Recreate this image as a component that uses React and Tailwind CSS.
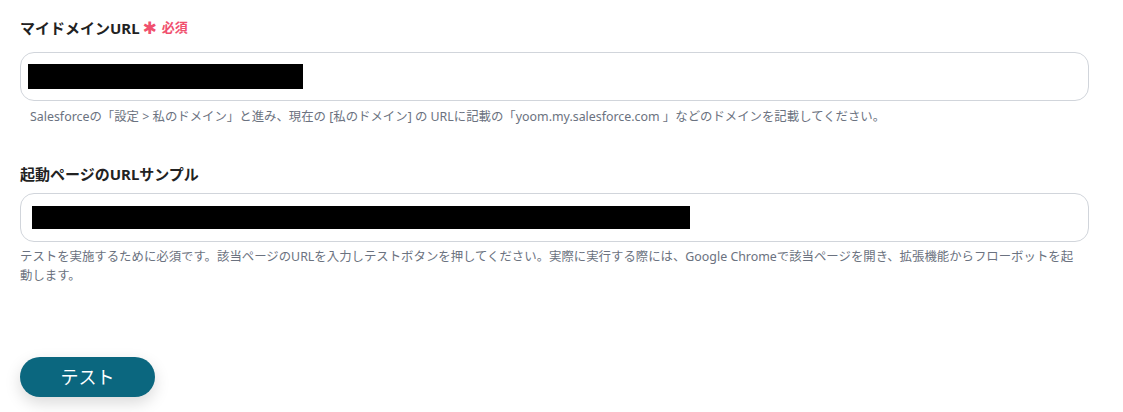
import React from "react";

const font = { fontFamily: '"Noto Sans", "Noto Sans CJK JP", sans-serif' };

function Field({ label, required, inputClass, barClass, help, helpClass }) {
  return (
    <div>
      <div className="flex items-center h-[22px] text-[15px] font-bold text-[#222222]">
        {label}
        {required && (
          <span className="ml-[3px] text-[#f0506e] text-[13px] font-bold flex items-center">
            <span className="text-[17px] leading-none mr-[5px]" style={{ fontFamily: '"DejaVu Sans", sans-serif' }}>✱</span>必須
          </span>
        )}
      </div>
      <div className={inputClass}>
        <div className={barClass} />
      </div>
      <p className={helpClass}>{help}</p>
    </div>
  );
}

export default function App() {
  return (
    <div className="w-[1123px] h-[412px] bg-white pl-[20px] pt-[17px]" style={font}>
      <Field
        label="マイドメインURL"
        required
        inputClass="mt-[13px] h-[49px] w-[1069px] rounded-[14px] border border-[#d1d5db] flex items-center"
        barClass="ml-[7px] h-[25px] w-[275px] bg-black"
        helpClass="mt-[7px] ml-[10px] text-[12.4px] leading-[18px] text-[#6b7280]"
        help="Salesforceの「設定 > 私のドメイン」と進み、現在の [私のドメイン] の URLに記載の「yoom.my.salesforce.com 」などのドメインを記載してください。"
      />
      <div className="mt-[37px]">
        <Field
          label="起動ページのURLサンプル"
          inputClass="mt-[8px] h-[49px] w-[1069px] rounded-[14px] border border-[#d1d5db] flex items-center"
          barClass="ml-[11px] h-[23px] w-[658px] bg-black"
          helpClass="mt-[5px] w-[1062px] text-[12.4px] leading-[19px] text-[#6b7280]"
          help="テストを実施するために必須です。該当ページのURLを入力しテストボタンを押してください。実際に実行する際には、Google Chromeで該当ページを開き、拡張機能からフローボットを起動します。"
        />
      </div>
      <button className="mt-[72px] h-[40px] w-[135px] rounded-full bg-[#0b677f] text-white text-[18px] shadow-[0_6px_16px_rgba(0,0,0,0.15)]">
        テスト
      </button>
    </div>
  );
}
